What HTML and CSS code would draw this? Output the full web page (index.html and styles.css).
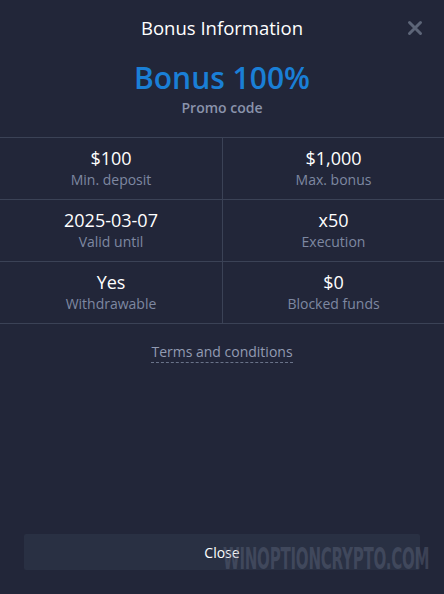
FILE: index.html
```html
<!DOCTYPE html>
<html>

<head>
  <title>Bonus Information</title>
  <link rel="stylesheet" href="styles.css">
</head>

<body>
  <div class="modal">
    <div class="header">
      <h1>Bonus Information</h1>
      <button class="close-x" aria-label="Close">
        <svg width="16" height="16" viewBox="0 0 16 16">
          <path d="M2.5 2.5 L13.5 13.5 M13.5 2.5 L2.5 13.5" stroke="#5d6578" stroke-width="3" stroke-linecap="round" />
        </svg>
      </button>
    </div>
    <div class="promo">
      <div class="promo-title">Bonus 100%</div>
      <div class="promo-sub">Promo code</div>
    </div>
    <div class="grid">
      <div class="cell"><div class="value">$100</div><div class="label">Min. deposit</div></div>
      <div class="cell"><div class="value">$1,000</div><div class="label">Max. bonus</div></div>
      <div class="cell"><div class="value">2025-03-07</div><div class="label">Valid until</div></div>
      <div class="cell"><div class="value">x50</div><div class="label">Execution</div></div>
      <div class="cell"><div class="value">Yes</div><div class="label">Withdrawable</div></div>
      <div class="cell"><div class="value">$0</div><div class="label">Blocked funds</div></div>
    </div>
    <div class="terms"><a href="#">Terms and conditions</a></div>
    <div class="footer">
      <button class="close-btn">Close</button>
      <span class="watermark">WINOPTIONCRYPTO.COM</span>
    </div>
  </div>
</body>

</html>
```

FILE: styles.css
```css
body {
  margin: 0;
  background-color: #222639;
  font-family: "Open Sans", "Noto Sans", sans-serif;
  color: white;
}

.modal {
  height: 594px;
  display: flex;
  flex-direction: column;
  position: relative;
}

.header {
  height: 56px;
  display: flex;
  align-items: center;
  justify-content: center;
  position: relative;
}

.header h1 {
  margin: 0;
  font-size: 18.5px;
  font-weight: 500;
  margin-top: -1px;
}

.close-x {
  position: absolute;
  right: 21px;
  top: 20px;
  border: 0;
  padding: 0;
  background: transparent;
  cursor: pointer;
  line-height: 0;
}

.promo {
  text-align: center;
  height: 81px;
}

.promo-title {
  color: #1a7fd6;
  font-size: 30px;
  font-weight: 600;
  line-height: 38px;
  margin-top: 3px;
}

.promo-sub {
  color: #8a93ab;
  font-size: 14px;
  font-weight: 600;
  line-height: 18px;
  margin-top: 2px;
}

.grid {
  display: grid;
  grid-template-columns: 223px 1fr;
  border-top: 1px solid #3b4256;
}

.cell {
  height: 61px;
  border-bottom: 1px solid #3b4256;
  text-align: center;
  display: flex;
  flex-direction: column;
  justify-content: center;
}

.cell:nth-child(odd) {
  border-right: 1px solid #3b4256;
}

.value {
  font-size: 18px;
  font-weight: 500;
  line-height: 24px;
  margin-top: -1px;
}

.label {
  color: #7e88a1;
  font-size: 14px;
  line-height: 20px;
}

.terms {
  text-align: center;
  margin-top: 16px;
}

.terms a {
  color: #929bb2;
  font-size: 14px;
  text-decoration: none;
  border-bottom: 1px dashed #6a7389;
  padding-bottom: 1px;
}

.footer {
  margin-top: auto;
  padding: 0 24px 24px;
  position: relative;
}

.close-btn {
  width: 100%;
  height: 36px;
  border: 0;
  border-radius: 2px;
  background: #293043;
  color: white;
  font-family: "Open Sans", "Noto Sans", sans-serif;
  font-size: 14px;
  cursor: pointer;
}

.watermark {
  position: absolute;
  left: 223px;
  top: 10px;
  font-family: "DejaVu Sans Condensed", "DejaVu Sans", sans-serif;
  font-weight: 700;
  font-size: 30px;
  line-height: 1;
  letter-spacing: -0.5px;
  color: rgba(110, 118, 140, 0.35);
  transform: scaleX(0.56);
  transform-origin: left center;
  pointer-events: none;
  white-space: nowrap;
}
```
